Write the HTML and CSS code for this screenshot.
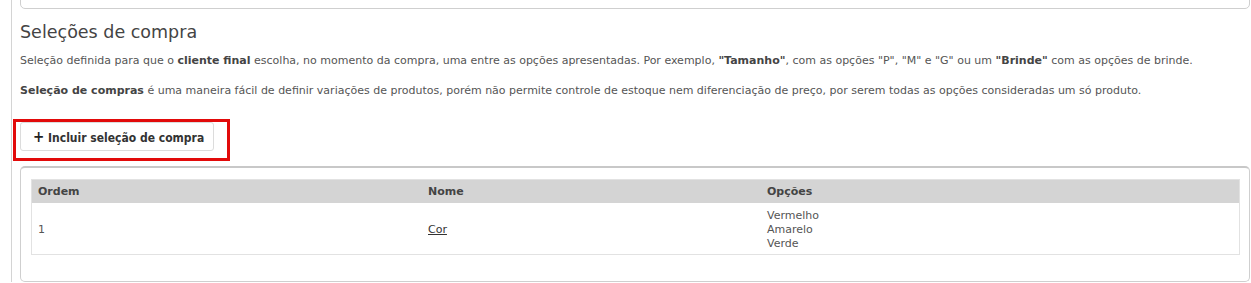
FILE: index.html
```html
<!DOCTYPE html>
<html lang="pt-BR">
<head>
<meta charset="utf-8">
<title>Seleções de compra</title>
<link rel="stylesheet" href="styles.css">
</head>
<body>
<div class="page">
  <div class="top-box"></div>
  <h2 class="title">Seleções de compra</h2>
  <p class="desc">Seleção definida para que o <b>cliente final</b> escolha, no momento da compra, uma entre as opções apresentadas. Por exemplo, <b>"Tamanho"</b>, com as opções "P", "M" e "G" ou um <b>"Brinde"</b> com as opções de brinde.</p>
  <p class="desc"><b>Seleção de compras</b> é uma maneira fácil de definir variações de produtos, porém não permite controle de estoque nem diferenciação de preço, por serem todas as opções consideradas um só produto.</p>
  <div class="btn-wrap">
    <button class="btn" type="button"><span class="plus">+</span> Incluir seleção de compra</button>
    <div class="highlight"></div>
  </div>
  <div class="table-box">
    <table class="grid">
      <thead>
        <tr><th class="c1">Ordem</th><th class="c2">Nome</th><th class="c3">Opções</th></tr>
      </thead>
      <tbody>
        <tr>
          <td>1</td>
          <td><a href="#" class="link">Cor</a></td>
          <td>Vermelho<br>Amarelo<br>Verde</td>
        </tr>
      </tbody>
    </table>
  </div>
</div>
</body>
</html>
```

FILE: styles.css
```css
html, body {
  margin: 0;
  padding: 0;
  background: #fff;
}
body {
  font-family: "DejaVu Sans", sans-serif;
  font-size: 11px;
  color: #555;
  overflow: hidden;
}
.page {
  margin-left: 11px;
  border-left: 1px solid #d4d4d4;
  padding-left: 8px;
  padding-right: 1px;
  min-height: 283px;
  box-sizing: border-box;
}
.top-box {
  margin-top: -12px;
  height: 19px;
  border: 1px solid #cfcfcf;
  border-radius: 5px;
}
.title {
  margin: 12px 0 0 0;
  font-size: 17.5px;
  line-height: 22px;
  font-weight: normal;
  color: #444;
}
.desc {
  margin: 11px 0 0 0;
  line-height: 14px;
}
.desc + .desc {
  margin-top: 16px;
}
.desc b {
  color: #444;
}
.btn-wrap {
  position: relative;
  margin-top: 24px;
  height: 29px;
}
.btn {
  height: 29px;
  width: 194px;
  padding: 0 0 0 12px;
  text-align: left;
  border: 1px solid #dcdcdc;
  border-radius: 3px;
  background: #fff;
  font-family: "DejaVu Sans Condensed", "DejaVu Sans", sans-serif;
  font-size: 12px;
  font-weight: bold;
  color: #333;
  box-sizing: border-box;
}
.plus {
  font-size: 15px;
  color: #222;
}
.highlight {
  position: absolute;
  left: -7px;
  top: -3px;
  width: 217px;
  height: 42px;
  border: 3px solid #e20a0a;
  box-sizing: border-box;
}
.table-box {
  margin-top: 15px;
  border: 1px solid #cfcfcf;
  border-top: 2px solid #c8c8c8;
  border-radius: 5px;
  padding: 11px 9px 26px 10px;
}
.grid {
  width: 100%;
  border-collapse: collapse;
  border: 1px solid #e2e2e2;
}
.grid th {
  background: #d4d4d4;
  height: 23px;
  line-height: 14px;
  text-align: left;
  padding: 0 6px;
  font-weight: bold;
  color: #444;
}
.grid .c1 { width: 378px; }
.grid .c2 { width: 327px; }
.grid td {
  padding: 6px 6px 3px;
  line-height: 14px;
  vertical-align: middle;
  color: #555;
}
.link {
  color: #333;
  text-decoration: underline;
}
```
